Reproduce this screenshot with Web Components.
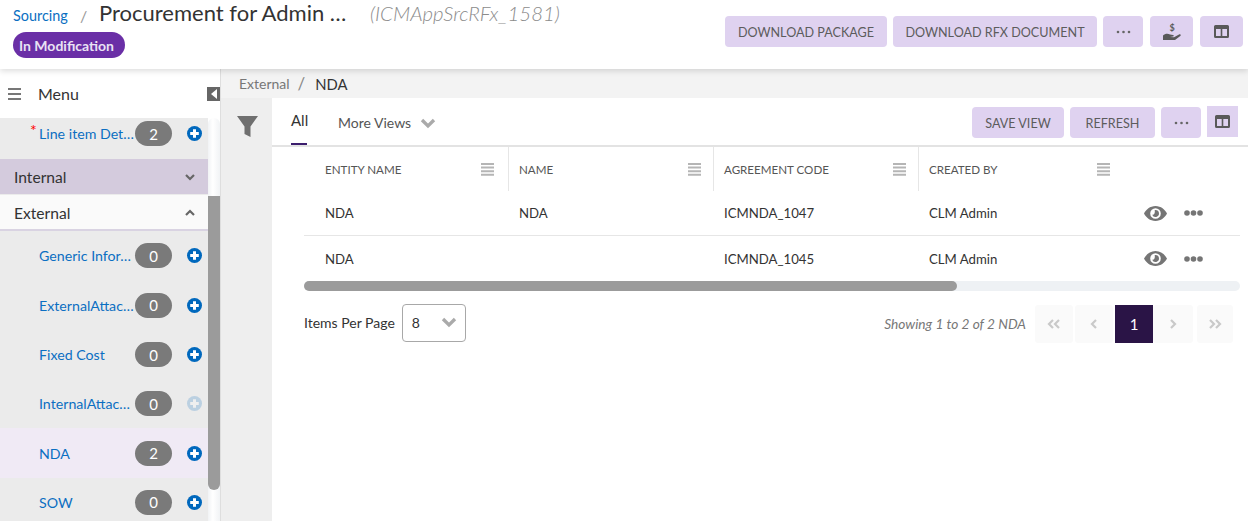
<!doctype html>
<html><head><meta charset="utf-8"><style>
html,body{margin:0;padding:0;height:521px;overflow:hidden;background:#fff;font-family:"Lato","Noto Sans",sans-serif;color:#333}
</style></head><body>
<x-app></x-app>
<script>
const ICON={
 plus:(o=1)=>`<svg width="15" height="15" viewBox="0 0 15 15" style="opacity:${o}"><circle cx="7.5" cy="7.5" r="7.5" fill="#0068bd"/><path d="M7.5 3.2v8.6M3.2 7.5h8.6" stroke="#fff" stroke-width="3"/></svg>`,
 cols:`<svg width="15" height="13" viewBox="0 0 15 13"><path fill="#595959" d="M1.5 0h12A1.5 1.5 0 0 1 15 1.5v10a1.5 1.5 0 0 1-1.5 1.5h-12A1.5 1.5 0 0 1 0 11.500v-10A1.5 1.5 0 0 1 1.500 0zM2 4v7h4.700V4zm6.300 0v7H13V4z"/></svg>`,
 dots3:`<svg width="15" height="4" viewBox="0 0 15 4" fill="#666"><circle cx="2" cy="2" r="1.300"/><circle cx="7.500" cy="2" r="1.300"/><circle cx="13" cy="2" r="1.300"/></svg>`,
 hand:`<svg width="18" height="17" viewBox="0 0 18 17"><text x="9" y="7.500" font-family="Lato,sans-serif" font-size="9" font-weight="700" text-anchor="middle" fill="#595959">$</text><path fill="#595959" d="M0 12.500C2 10.500 5 10.500 7 11.500L10 12c1 .2 1 1.500 0 1.600L7 14l4 .2 5-2.700c1.300-.6 2.300.6 1.300 1.500L12 17H0z"/></svg>`,
 menu:`<svg width="13" height="13" viewBox="0 0 13 13" fill="#b5b5b5"><path d="M0 0h13v2H0zM0 3.600h13v2H0zM0 7.200h13v2H0zM0 10.800h13v2H0z"/></svg>`,
 eye:`<svg width="23" height="15" viewBox="0 0 23 15"><path fill="#757575" fill-rule="evenodd" d="M11.500 0C17 0 21 3.700 23 7.500 21 11.300 17 15 11.500 15S2 11.300 0 7.500C2 3.700 6 0 11.500 0zm0 2.200a5.300 5.300 0 1 0 0 10.600 5.300 5.300 0 0 0 0-10.600z"/><path fill="#757575" d="M11.500 4a3.500 3.500 0 1 1-3.300 4.700c1.600.5 3.200-1 2.500-4.600z"/></svg>`,
 more:`<svg width="19" height="6" viewBox="0 0 19 6" fill="#757575"><circle cx="3" cy="3" r="2.800"/><circle cx="9.500" cy="3" r="2.800"/><circle cx="16" cy="3" r="2.800"/></svg>`,
 chev:(d,c='#777',s=12)=>`<svg width="${s}" height="${s}" viewBox="0 0 12 12"><path d="${d==='up'?'M2 8l4-4 4 4':'M2 4l4 4 4-4'}" fill="none" stroke="${c}" stroke-width="2.200"/></svg>`,
 pg:(d)=>`<svg width="14" height="12" viewBox="0 0 14 12" fill="none" stroke="#c9c9c9" stroke-width="2.200">${d}</svg>`
};
function def(name,css,html){
 customElements.define(name,class extends HTMLElement{
  connectedCallback(){ if(this.shadowRoot)return;
   const r=this.attachShadow({mode:'open'});
   r.innerHTML=`<style>${css}</style>`+(typeof html==='function'?html(this):html);
  }
 });
}
def('x-btn',`:host{display:inline-flex;align-items:center;justify-content:center;box-sizing:border-box;height:31px;background:#dfd2f0;border-radius:4px;color:#5c5c5c;font-size:12.600px;white-space:nowrap}
 :host([t]){padding-top:2px}
 :host([square]){border-radius:0}`,`<slot></slot>`);
def('x-header',`:host{display:flex;height:69px;justify-content:space-between;position:relative;z-index:2;background:#fff;box-shadow:0 2px 6px rgba(0,0,0,.14)}
 .l{padding:0 0 0 13px}
 .t{display:flex;align-items:center;height:26px}
 .s{color:#0b6fc2;font-size:14.400px;width:67px;margin-top:5px}
 .sl{color:#999;font-size:16px;width:19px;margin-top:4px}
 .n{font-size:22px;color:#333;width:271px;white-space:nowrap;margin-top:-1px}
 .id{font-size:20.400px;font-style:italic;font-weight:300;color:#8c8c8c;white-space:nowrap;margin-top:-1px}
 .p{display:flex;align-items:center;margin-top:6px;height:26px;width:112px;box-sizing:border-box;padding-left:6px;background:#6a2fa6;border-radius:13px;color:#e9e2f4;font-size:14px;font-weight:700;white-space:nowrap}
 .r{display:flex;padding:16px 5px 0 0;gap:6px}
 .r x-btn:nth-child(1){width:162px}.r x-btn:nth-child(2){width:204px}
 .r x-btn:nth-child(3){width:40px;margin-right:1px}.r x-btn:nth-child(4){width:43px;margin-right:1px}.r x-btn:nth-child(5){width:43px}`,
 `<div class="l"><div class="t"><span class="s">Sourcing</span><span class="sl">/</span><span class="n">Procurement for Admin …</span><span class="id">(ICMAppSrcRFx_1581)</span></div><span class="p">In Modification</span></div>
 <div class="r"><x-btn t>DOWNLOAD PACKAGE</x-btn><x-btn t>DOWNLOAD RFX DOCUMENT</x-btn><x-btn>${ICON.dots3}</x-btn><x-btn>${ICON.hand}</x-btn><x-btn>${ICON.cols}</x-btn></div>`);
def('x-menu-row',`:host{display:flex;align-items:center;height:49.300px;box-sizing:border-box;padding-left:39px;color:#0b6fc2;font-size:14.200px;position:relative}
 :host([active]){background:#f0eaf5}
 .t{width:96px;white-space:nowrap;overflow:hidden}
 .b{width:37px;height:25px;border-radius:13px;background:#7a7a7a;color:#fff;display:flex;align-items:center;justify-content:center;font-size:15px;margin-right:15px}
 svg{display:block}
 .star{position:absolute;left:30px;top:13px;line-height:1;color:#f00;font-size:16px}`,
 e=>`${e.hasAttribute('req')?'<span class="star">*</span>':''}<span class="t">${e.getAttribute('label')}</span><span class="b">${e.getAttribute('n')}</span>${ICON.plus(e.hasAttribute('off')?.2:1)}`);
def('x-group',`:host{display:flex;align-items:center;justify-content:space-between;box-sizing:border-box;height:36px;padding:2px 12px 0 14px;font-size:15.600px;color:#333;background:#fafafa;border-bottom:2px solid #d9d3e2}
 :host([dark]){background:#d4cbdd;border-bottom:0;height:35px;margin-bottom:1px;padding-top:0}svg{display:block}`,
 e=>`<span>${e.getAttribute('label')}</span>${ICON.chev(e.hasAttribute('dark')?'down':'up','#666',12)}`);
def('x-sidebar',`:host{display:flex;flex-direction:column;width:220px;flex:none;background:#fff;border-right:1px solid #dedede;height:452px;overflow:hidden}
 .h{display:flex;align-items:center;height:49px;flex:none;padding-left:8px;font-size:16px;color:#333;position:relative}
 .h span{margin-left:17px}
 .h svg.m{display:block}
 .c{position:absolute;right:0;top:18px;width:13px;height:14px;background:#666;display:flex;align-items:center;justify-content:center}
 .b{display:flex;flex:1;min-height:0}
 .l{width:208px;background:#ebebeb;overflow:hidden}
 .l .first{margin:-9px 0 1px}
 .track{width:12px;background:linear-gradient(90deg,#f1f3f5,#fff 40%,#f1f3f5);border-radius:6px 6px 0 0;flex:none}
 .thumb{width:12px;height:294px;margin-top:78px;background:#9b9b9b;border-radius:0 0 6px 6px}`,
 `<div class="h"><svg class="m" width="13" height="12" viewBox="0 0 13 12" fill="#777"><path d="M0 0h13v2H0zM0 5h13v2H0zM0 10h13v2H0z"/></svg><span>Menu</span><div class="c"><svg width="6" height="10" viewBox="0 0 6 10"><path d="M6 0v10L0 5z" fill="#fff"/></svg></div></div>
 <div class="b"><div class="l"><div class="first"><x-menu-row req label="Line item Det…" n="2"></x-menu-row></div>
 <x-group dark label="Internal"></x-group><x-group label="External"></x-group>
 <x-menu-row label="Generic Infor…" n="0"></x-menu-row><x-menu-row label="ExternalAttac…" n="0"></x-menu-row><x-menu-row label="Fixed Cost" n="0"></x-menu-row><x-menu-row off label="InternalAttac…" n="0"></x-menu-row><x-menu-row active label="NDA" n="2"></x-menu-row><x-menu-row label="SOW" n="0"></x-menu-row></div>
 <div class="track"><div class="thumb"></div></div></div>`);
def('x-crumb',`:host{display:flex;align-items:center;height:29px;background:#f3f3f3;padding-left:18px;font-size:14px;color:#777}
 .sl{margin:0 10px 0 8px;font-size:17px;color:#888}.n{font-size:14.800px;color:#333}`,
 `<span>External</span><span class="sl">/</span><span class="n">NDA</span>`);
def('x-toolbar',`:host{display:flex;align-items:flex-start;height:49px;box-sizing:border-box;border-bottom:2px solid #e3e3e3;padding-left:19px;font-size:14px;color:#555}
 .all{height:47px;box-sizing:border-box;padding-top:13px;width:16px;color:#333;border-bottom:2px solid #3c1e6e;margin-right:31px;font-size:15px;line-height:19px}
 .mv{display:flex;align-items:center;gap:8px;padding-top:16px;line-height:18px}
 .mv svg{display:block}
 .r{margin-left:auto;display:flex;gap:6px;padding:9px 10px 0 0;align-items:flex-start}
 .r x-btn:nth-child(1){width:92px}.r x-btn:nth-child(2){width:85px}.r x-btn:nth-child(3){width:40px}.r x-btn:nth-child(4){width:31px;margin-top:-1px}`,
 `<span class="all">All</span><span class="mv">More Views ${ICON.chev('down','#aaa',18)}</span><div class="r"><x-btn t>SAVE VIEW</x-btn><x-btn t>REFRESH</x-btn><x-btn>${ICON.dots3}</x-btn><x-btn square>${ICON.cols}</x-btn></div>`);
def('x-th',`:host{display:flex;align-items:center;justify-content:space-between;box-sizing:border-box;height:44px;padding:1px 12px 0 10px;border-right:1px solid #e6e6e6;font-size:11.600px;color:#555}
 :host([first]){padding:0 14px 0 21px}
 :host([last]){border-right:0;padding-right:130px}svg{display:block}`,
 e=>`<span>${e.getAttribute('label')}</span>${ICON.menu}`);
def('x-td',`:host{display:flex;align-items:center;box-sizing:border-box;padding-left:10px;font-size:13.200px;color:#333;white-space:nowrap}
 :host([first]){padding-left:21px}
 :host([last]){justify-content:space-between;padding-right:37px}
 .i{display:flex;align-items:center;gap:17px}svg{display:block}`,
 e=>`<span><slot></slot></span>${e.hasAttribute('last')?`<span class="i">${ICON.eye}${ICON.more}</span>`:''}`);
def('x-table',`:host{display:block;margin-left:32px;margin-right:8px}
 .g{display:grid;grid-template-columns:205px 205px 205px 1fr}
 .hd{height:44px}
 .row{height:45px;box-sizing:border-box}.sep{border-bottom:1px solid #e6e6e6}
 .sb{height:10px;border-radius:5px;background:#eef1f4}.sb div{height:10px;width:653px;border-radius:5px;background:#9b9b9b}`,
 `<div class="g hd"><x-th first label="ENTITY NAME"></x-th><x-th label="NAME"></x-th><x-th label="AGREEMENT CODE"></x-th><x-th last label="CREATED BY"></x-th></div>
 <div class="g row sep"><x-td first>NDA</x-td><x-td>NDA</x-td><x-td>ICMNDA_1047</x-td><x-td last>CLM Admin</x-td></div>
 <div class="g row"><x-td first>NDA</x-td><x-td></x-td><x-td>ICMNDA_1045</x-td><x-td last>CLM Admin</x-td></div>
 <div class="sb"><div></div></div>`);
def('x-pager',`:host{display:flex;align-items:flex-start;justify-content:space-between;height:39px;margin:13px 15px 0 32px;font-size:14px;color:#333}
 .l{display:flex;align-items:center;gap:7px}
 .l>span{margin-bottom:2px}
 .sel{display:flex;align-items:center;justify-content:space-between;box-sizing:border-box;width:64px;height:38px;border:1px solid #a8a8a8;border-radius:4px;padding:0 7px 2px 9px}
 .r{display:flex;align-items:center;margin-top:1px}
 .sh{font-style:italic;color:#777;margin:0 9px 2px 0;font-size:13.700px}
 .p{display:flex;align-items:center;justify-content:center;height:38px;width:38px;background:#fafafa;border-radius:3px;margin-right:2px}
 .cur{background:#2a1446;color:#fff;border-radius:0;margin:0;font-size:15px}
 svg{display:block}`,
 `<div class="l"><span>Items Per Page</span><div class="sel"><span>8</span>${ICON.chev('down','#aaa',18)}</div></div>
 <div class="r"><span class="sh">Showing 1 to 2 of 2 NDA</span>
 <span class="p">${ICON.pg('<path d="M6 2L2 6l4 4M12 2L8 6l4 4"/>')}</span><span class="p">${ICON.pg('<path d="M9 2L5 6l4 4"/>')}</span><span class="p cur">1</span><span class="p" style="margin:0 4px 0 0;width:40px">${ICON.pg('<path d="M5 2l4 4-4 4"/>')}</span><span class="p" style="width:36px;margin:0">${ICON.pg('<path d="M2 2l4 4-4 4M8 2l4 4-4 4"/>')}</span></div>`);
def('x-app',`:host{display:block;height:521px;overflow:hidden}
 .b{display:flex;height:452px}
 .m{flex:1;min-width:0;display:flex;flex-direction:column}
 .w{display:flex;flex:1;min-height:0}
 .f{width:51px;flex:none;background:#eeeeee;padding:18px 0 0 16px;box-sizing:border-box}
 .f svg{display:block}
 .c{flex:1;min-width:0;background:#fff}`,
 `<x-header></x-header><div class="b"><x-sidebar></x-sidebar><div class="m"><x-crumb></x-crumb><div class="w"><div class="f"><svg width="21" height="21" viewBox="0 0 21 21"><path fill="#6f6f6f" d="M0 0h21l-7.500 10.500V21L7.500 18v-7.500z"/></svg></div><div class="c"><x-toolbar></x-toolbar><x-table></x-table><x-pager></x-pager></div></div></div></div>`);
</script>
</body></html>
